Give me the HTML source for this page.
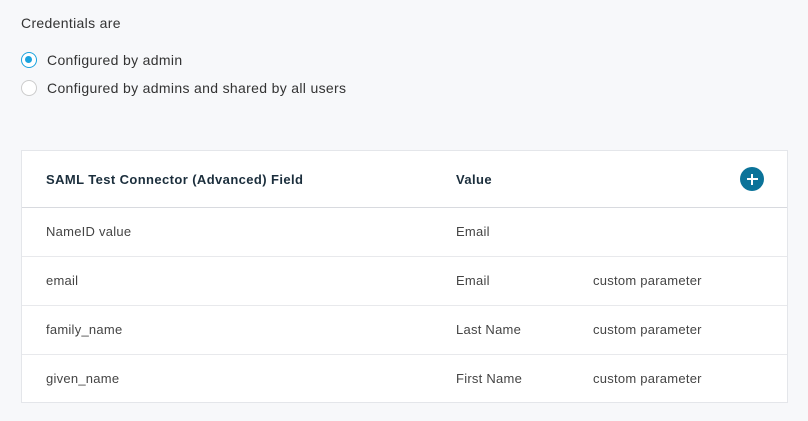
<!DOCTYPE html>
<html><head><style>
body{margin:0;width:808px;height:421px;background:#f7f8fa;font-family:"Liberation Sans",sans-serif;color:#333;position:relative;overflow:hidden}
.a{position:absolute;white-space:nowrap;letter-spacing:0.33px}
.r{position:absolute;left:21px;width:16px;height:16px;border-radius:50%;box-sizing:border-box;background:#fff}
.tbl{position:absolute;left:21px;top:150px;width:767px;height:253px;background:#fff;border:1px solid #e4e6ea;box-sizing:border-box}
.line{position:absolute;left:0;right:0;height:1px;background:#e8e9ec}
.c{position:absolute;font-size:13px;color:#444;white-space:nowrap;letter-spacing:0.25px}
.h{position:absolute;font-size:13px;font-weight:bold;color:#1b2e3c;letter-spacing:0.4px}
</style></head><body>
<div class="a" style="left:21px;top:15px;font-size:14px;color:#333">Credentials are</div>
<div class="r" style="top:52px;border:1.5px solid #1aa3de"><div style="position:absolute;left:3px;top:3px;width:7px;height:7px;border-radius:50%;background:#1aa3de"></div></div>
<div class="a" style="left:47px;top:52px;font-size:14px">Configured by admin</div>
<div class="r" style="top:80px;border:1px solid #ccc"></div>
<div class="a" style="left:47px;top:80px;font-size:14px">Configured by admins and shared by all users</div>
<div class="tbl">
<div class="h" style="left:24px;top:21px">SAML Test Connector (Advanced) Field</div>
<div class="h" style="left:434px;top:21px">Value</div>
<div style="position:absolute;left:718px;top:16px;width:24px;height:24px;border-radius:50%;background:#0b7399">
<div style="position:absolute;left:6.5px;top:11px;width:11px;height:2px;background:#fff"></div>
<div style="position:absolute;left:11px;top:6.5px;width:2px;height:11px;background:#fff"></div></div>
<div class="line" style="top:56px;background:#d8dadf"></div>
<div class="line" style="top:105px"></div>
<div class="line" style="top:154px"></div>
<div class="line" style="top:203px"></div>
<div class="c" style="left:24px;top:73px">NameID value</div><div class="c" style="left:434px;top:73px">Email</div>
<div class="c" style="left:24px;top:122px">email</div><div class="c" style="left:434px;top:122px">Email</div><div class="c" style="left:571px;top:122px">custom parameter</div>
<div class="c" style="left:24px;top:171px">family_name</div><div class="c" style="left:434px;top:171px">Last Name</div><div class="c" style="left:571px;top:171px">custom parameter</div>
<div class="c" style="left:24px;top:220px">given_name</div><div class="c" style="left:434px;top:220px">First Name</div><div class="c" style="left:571px;top:220px">custom parameter</div>
</div>
</body></html>
